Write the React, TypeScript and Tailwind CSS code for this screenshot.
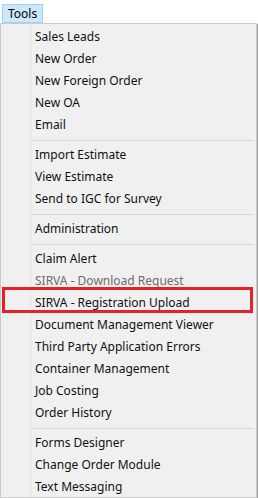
type Entry = { label: string; disabled?: boolean } | "sep";

const entries: Entry[] = [
  { label: "Sales Leads" },
  { label: "New Order" },
  { label: "New Foreign Order" },
  { label: "New OA" },
  { label: "Email" },
  "sep",
  { label: "Import Estimate" },
  { label: "View Estimate" },
  { label: "Send to IGC for Survey" },
  "sep",
  { label: "Administration" },
  "sep",
  { label: "Claim Alert" },
  { label: "SIRVA - Download Request", disabled: true },
  { label: "SIRVA - Registration Upload" },
  { label: "Document Management Viewer" },
  { label: "Third Party Application Errors" },
  { label: "Container Management" },
  { label: "Job Costing" },
  { label: "Order History" },
  "sep",
  { label: "Forms Designer" },
  { label: "Change Order Module" },
  { label: "Text Messaging" },
];

export default function App() {
  return (
    <div className="w-[258px] h-[498px] overflow-hidden bg-white text-[12px] text-black" style={{ fontFamily: '"Noto Sans", "Segoe UI", sans-serif' }}>
      {/* menu bar */}
      <div className="h-[23px] flex items-end pl-[2px]">
        <div className="h-[19px] px-[5px] flex items-center bg-[#cce8ff] border border-[#99d1ff] leading-none">Tools</div>
      </div>
      {/* dropdown */}
      <div className="relative w-[257px] h-[475px] bg-[#f0f0f0] border border-[#cccccc] shadow-[1px_1px_0_#a0a0a0]">
        <div className="absolute left-[29px] top-0 bottom-0 w-px bg-[#e3e3e3]" />
        <div className="flex flex-col pt-[2px]">
          {entries.map((e, i) =>
            e === "sep" ? (
              <div key={i} className="h-[8px] flex items-center pl-[31px] pr-[2px]">
                <div className="h-px w-full bg-[#d7d7d7]" />
              </div>
            ) : (
              <div key={i} className={"h-[22px] flex items-center pl-[34px] whitespace-nowrap " + (e.disabled ? "text-[#6d6d6d]" : "text-[#111]")}>
                {e.label}
              </div>
            )
          )}
        </div>
        {/* highlight annotation */}
        <div className="absolute left-[1px] top-[263px] w-[251px] h-[26px] border-[3px] border-[#e8202a]" />
      </div>
    </div>
  );
}
